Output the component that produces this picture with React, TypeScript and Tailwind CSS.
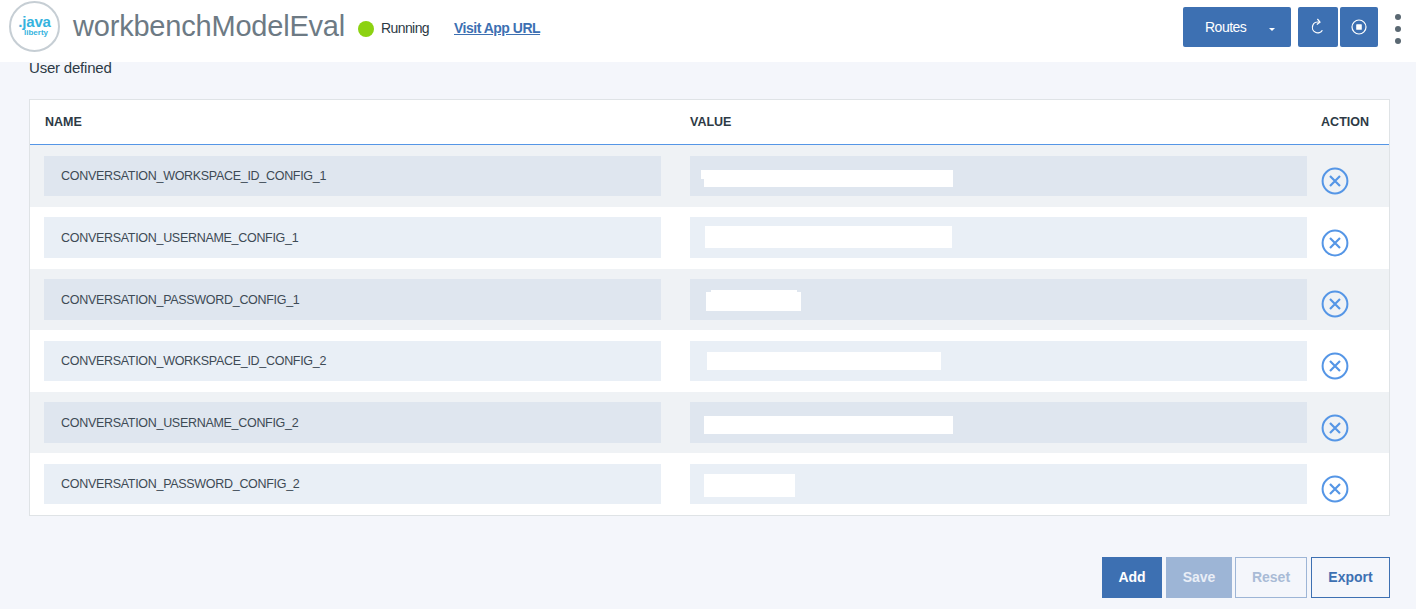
interface EnvRow {
  name: string;
  mask: string;
  notch?: string;
}

const rows: EnvRow[] = [
  { name: 'CONVERSATION_WORKSPACE_ID_CONFIG_1', mask: 'ml-[14px] mt-[5px] w-[249px] h-[17px]', notch: 'left-[-3px] top-0 w-[3px] h-[9px]' },
  { name: 'CONVERSATION_USERNAME_CONFIG_1', mask: 'ml-[15px] mt-[-2px] w-[247px] h-[22px]' },
  { name: 'CONVERSATION_PASSWORD_CONFIG_1', mask: 'ml-[16px] mt-[5px] w-[95px] h-[19px]', notch: 'left-[5px] top-[-2px] w-[86px] h-[2px]' },
  { name: 'CONVERSATION_WORKSPACE_ID_CONFIG_2', mask: 'ml-[17px] mt-[1px] w-[234px] h-[18px]' },
  { name: 'CONVERSATION_USERNAME_CONFIG_2', mask: 'ml-[14px] mt-[5px] w-[249px] h-[18px]' },
  { name: 'CONVERSATION_PASSWORD_CONFIG_2', mask: 'ml-[14px] mt-[2px] w-[91px] h-[23px]' },
];

function RemoveIcon() {
  return (
    <svg width="28" height="28" viewBox="0 0 28 28" fill="none" stroke="#5596e6" strokeWidth="2">
      <circle cx="14" cy="14" r="12.4" />
      <path d="M9 9l10 10M19 9L9 19" strokeWidth="2.2" />
    </svg>
  );
}

function RestartIcon() {
  return (
    <svg width="16" height="18" viewBox="0 0 16 18" fill="none" stroke="#fff" strokeWidth="1.2">
      <path d="M9.2 4.2A5.4 5.4 0 1 0 12.4 12.2" />
      <path d="M7.4 1l2.6 3.2L6.8 6.6" />
    </svg>
  );
}

function StopIcon() {
  return (
    <svg width="16" height="16" viewBox="0 0 16 16" fill="none">
      <circle cx="8" cy="8" r="7" stroke="#fff" strokeWidth="1.2" />
      <rect x="5.2" y="5.2" width="5.6" height="5.6" rx="0.6" fill="#fff" />
    </svg>
  );
}

export default function App() {
  return (
    <div className="w-[1425px] h-[609px] overflow-hidden bg-white font-['Liberation_Sans',Arial,sans-serif] text-[#2d3a45]">
      <header className="h-[62px] flex items-start bg-white">
        <div className="w-[51px] h-[51px] ml-[9px] mt-[1px] rounded-full border-2 border-[#c6ced4] flex flex-col items-center pt-[11px] text-[#35b3de]">
          <span className="h-[15px] text-[15px] leading-[15px] font-bold tracking-[-0.2px]">.java</span>
          <span className="h-[8px] text-[8px] leading-[8px] font-bold self-end mr-[10px]">liberty</span>
        </div>
        <h1 className="ml-[13px] mt-[9px] text-[29px] leading-[34px] tracking-[-0.2px] text-[#6d7a84] font-normal">workbenchModelEval</h1>
        <span className="ml-[13px] mt-[21px] w-4 h-4 rounded-full bg-[#8cd211]" />
        <span className="ml-[7px] mt-[20px] text-[14px] leading-[17px] tracking-[-0.6px] text-[#2d3a45]">Running</span>
        <a className="ml-[25px] mt-[20px] text-[14px] leading-[17px] tracking-[-0.5px] font-bold text-[#3d70b2] underline">Visit App URL</a>
        <div className="ml-auto mt-[7px] flex items-start">
          <button className="w-[108px] h-10 rounded-[2px] bg-[#3d70b2] text-white text-[14px] tracking-[-0.5px] flex items-center pl-[22px]">
            Routes
            <span className="ml-[23px] mt-[4px] border-x-[3px] border-t-[3px] border-x-transparent border-t-white" />
          </button>
          <button className="ml-[7px] w-10 h-10 rounded-[2px] bg-[#3d70b2] flex items-center justify-center">
            <RestartIcon />
          </button>
          <button className="ml-[2px] w-[38px] h-10 rounded-[2px] bg-[#3d70b2] flex items-center justify-center">
            <StopIcon />
          </button>
          <div className="ml-[17px] mr-[24px] mt-[7px] flex flex-col gap-[6px]">
            <span className="w-[6px] h-[6px] rounded-full bg-[#5a6872]" />
            <span className="w-[6px] h-[6px] rounded-full bg-[#5a6872]" />
            <span className="w-[6px] h-[6px] rounded-full bg-[#5a6872]" />
          </div>
        </div>
      </header>

      <main className="w-[1416px] h-[547px] bg-[#f4f6fb] pl-[29px] pr-[26px]">
        <p className="h-[37px] text-[15px] leading-[11px] tracking-[-0.2px] text-[#2d3a45]">User defined</p>

        <section className="h-[417px] bg-white border border-[#dfe3e6]">
          <div className="h-[45.4px] flex items-center border-b-[1.5px] border-[#5596e6] text-[12.5px] font-bold text-[#2d3a45]">
            <span className="ml-[15px] w-[645px]">NAME</span>
            <span>VALUE</span>
            <span className="ml-auto mr-[20px]">ACTION</span>
          </div>
          {rows.map((row, i) => (
            <div key={row.name} className={`h-[61.6px] flex items-center ${i % 2 === 0 ? 'bg-[#eff2f5]' : 'bg-white'}`}>
              <div className={`ml-[14px] w-[617px] h-[40.6px] pl-[17px] pt-[1px] flex items-center text-[12.5px] tracking-[-0.3px] text-[#3d4a55] ${i % 2 === 0 ? 'bg-[#dfe6ef]' : 'bg-[#e9eff6]'}`}>
                {row.name}
              </div>
              <div className={`ml-[29px] w-[617px] h-[40.6px] flex items-center ${i % 2 === 0 ? 'bg-[#dfe6ef]' : 'bg-[#e9eff6]'}`}>
                <div className={`relative bg-white ${row.mask}`}>
                  {row.notch && <div className={`absolute bg-white ${row.notch}`} />}
                </div>
              </div>
              <div className="ml-[14px] mt-[10px]">
                <RemoveIcon />
              </div>
            </div>
          ))}
        </section>

        <div className="mt-[41px] flex justify-end items-start text-[14px] font-bold">
          <button className="w-[60px] h-[41px] bg-[#3d70b2] text-white">Add</button>
          <button className="ml-[4px] w-[66px] h-[41px] bg-[#9db5d6] text-[#e9eef6]">Save</button>
          <button className="ml-[3px] w-[72px] h-[41px] border border-[#9db5d6] text-[#a9bbd6]">Reset</button>
          <button className="ml-[4px] w-[79px] h-[41px] border border-[#3d70b2] text-[#3d70b2]">Export</button>
        </div>
      </main>
    </div>
  );
}
